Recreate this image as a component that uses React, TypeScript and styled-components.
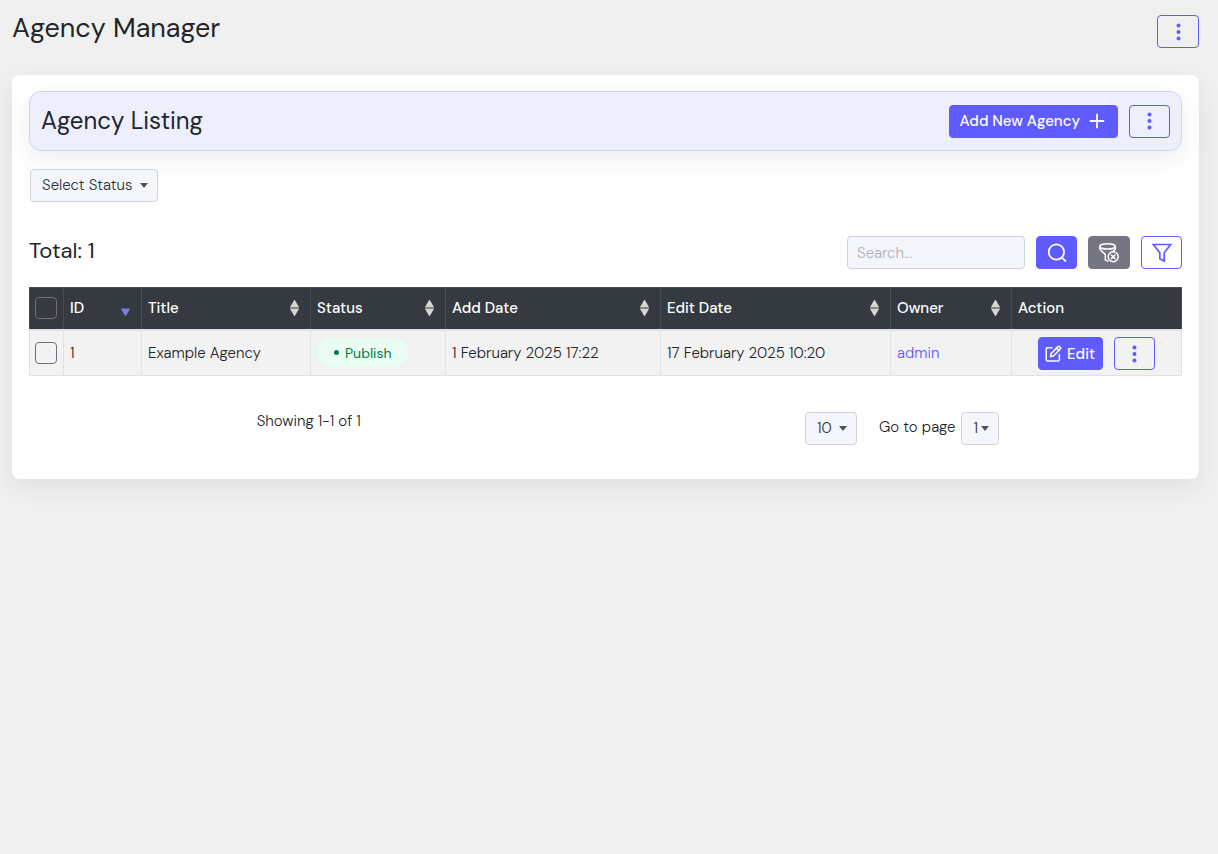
import React from "react";
import styled, { createGlobalStyle } from "styled-components";

const accent = "#5f5bff";

const GlobalStyle = createGlobalStyle`
  *, *::before, *::after { box-sizing: border-box; }
  body {
    margin: 0;
    background: #f0f0f0;
    color: #212529;
    font-family: "DM Sans", Lato, "Open Sans", sans-serif;
    font-size: 15px;
    font-weight: 300;
    line-height: 24px;
  }
  button, input, select { font: inherit; }
`;

const Page = styled.main`
  padding: 12px 19px 32px 12px;
`;

const PageHeader = styled.header`
  display: flex;
  justify-content: space-between;
  align-items: flex-start;
  height: 63px;
  padding-top: 3px;
`;

const PageTitle = styled.h1`
  margin: 0;
  font-size: 27px;
  line-height: 26px;
  font-weight: 400;
`;

const Card = styled.section`
  padding: 16px 0 34px;
  border-radius: 8px;
  background: #fff;
  box-shadow: 0 8px 26px rgba(40, 41, 71, 0.08);
`;

const Section = styled.div`
  padding: 0 17px;
`;

const Banner = styled.div`
  display: flex;
  align-items: center;
  justify-content: space-between;
  height: 60px;
  padding: 0 11px;
  border: 1px solid #d3d0ff;
  border-radius: 12px;
  background: #edeffc;
  box-shadow: 0 8px 26px rgba(40, 41, 61, 0.08);
`;

const BannerTitle = styled.h2`
  margin: 0;
  font-size: 24px;
  line-height: 30px;
  font-weight: 400;
`;

const Group = styled.div`
  display: flex;
  align-items: center;
  gap: 11px;
`;

const RowActions = styled(Group)`
  justify-content: center;
  padding-top: 2px;
`;

type Tone = "solid" | "outline" | "muted";

const fills: Record<Tone, string> = {
  solid: accent,
  outline: "transparent",
  muted: "#757682",
};

type Size = "icon" | "iconWide" | "small" | "large";

const sizes: Record<Size, string> = {
  icon: "width: 41px; padding: 0;",
  iconWide: "width: 42px; padding: 0;",
  small: "gap: 5px; padding: 0 7px 0 6px;",
  large: "gap: 9px; padding: 0 12px 0 10px;",
};

const Button = styled.button<{ $tone: Tone; $size?: Size }>`
  display: inline-flex;
  align-items: center;
  justify-content: center;
  height: 33px;
  ${(p) => sizes[p.$size ?? "icon"]}
  border: 1px solid ${(p) => (p.$tone === "muted" ? fills.muted : accent)};
  border-radius: 4px;
  background: ${(p) => fills[p.$tone]};
  color: ${(p) => (p.$tone === "outline" ? accent : "#fff")};
  font-weight: 500;
  cursor: pointer;
`;

const Filters = styled.div`
  padding-left: 1px;
  margin-top: 18px;
`;

const SelectBox = styled.span<{ $width: number }>`
  display: inline-grid;
  align-items: center;
  width: ${(p) => p.$width}px;
  vertical-align: top;
  & > * { grid-area: 1 / 1; }
  & > svg { justify-self: end; margin-right: 10px; pointer-events: none; }
`;

const Select = styled.select`
  appearance: none;
  width: 100%;
  height: 33px;
  padding: 0 0 2px 11px;
  border: 1px solid #ced4da;
  border-radius: 4px;
  background: #f4f6fc;
  color: #2c3136;
`;

const Toolbar = styled.div`
  display: flex;
  align-items: center;
  justify-content: space-between;
  margin: 34px 0 18px;
`;

const Total = styled.h3`
  margin: 0;
  font-size: 22px;
  line-height: 26px;
  padding-bottom: 4px;
  font-weight: 400;
`;

const SearchInput = styled.input`
  width: 178px;
  height: 33px;
  padding: 0 9px;
  border: 1px solid #ced4da;
  border-radius: 4px;
  background: #f4f6fc;
  color: #212529;
  &::placeholder { color: #aeb1b6; opacity: 1; }
`;

const Table = styled.table`
  width: 100%;
  table-layout: fixed;
  border-collapse: collapse;
`;

const HeadCell = styled.th`
  height: 42px;
  padding: 0 10px 0 6px;
  border: 1px solid #454d55;
  border-bottom: 2px solid #dee2e6;
  background: #343a40;
  color: #fff;
  font-weight: 500;
  text-align: left;
  &:first-child { padding: 0 0 0 5px; }
`;

const HeadContent = styled.div`
  display: flex;
  align-items: center;
  justify-content: space-between;
`;

const Cell = styled.td`
  height: 46px;
  padding: 0 6px;
  border: 1px solid #dee2e6;
  background: #f2f2f2;
  &:first-child { padding: 0 0 0 5px; }
`;

const Check = styled.input`
  display: block;
  appearance: none;
  width: 22px;
  height: 22px;
  margin: 0;
  border: 1px solid #6f7080;
  border-radius: 4px;
  background: transparent;
  &:checked { background: ${accent}; }
`;

const Badge = styled.span`
  display: inline-flex;
  align-items: center;
  gap: 6px;
  height: 29px;
  padding: 0 17px;
  border-radius: 15px;
  background: #eafdf2;
  color: #057a4b;
  font-size: 14px;
  font-weight: 400;
  &::before {
    content: "";
    width: 5px;
    height: 5px;
    border-radius: 50%;
    background: currentColor;
  }
`;

const Link = styled.a`
  color: ${accent};
  text-decoration: none;
`;

const Footer = styled.footer`
  display: grid;
  grid-template-columns: 1fr 1fr;
  margin-top: 36px;
  text-align: center;
`;

const Summary = styled.p`
  margin: 0;
  line-height: 18px;
`;

const Pager = styled.div`
  display: flex;
  justify-content: center;
  gap: 22px;
`;

const PageJump = styled.label`
  display: flex;
  gap: 6px;
  line-height: 30px;
`;

const Dots = () => (
  <svg width="5" height="18" viewBox="0 0 5 18" fill="currentColor" aria-hidden="true">
    <circle cx="2.5" cy="2.5" r="2" />
    <circle cx="2.5" cy="9" r="2" />
    <circle cx="2.5" cy="15.5" r="2" />
  </svg>
);

const Caret = () => (
  <svg width="8" height="5" viewBox="0 0 8 5" aria-hidden="true">
    <path d="M0 0h8L4 5z" fill="#50545a" />
  </svg>
);

const Plus = () => (
  <svg width="16" height="16" viewBox="0 0 16 16" fill="none" stroke="currentColor" strokeWidth="1.8" aria-hidden="true">
    <path d="M8 .8v14.4M.8 8h14.4" />
  </svg>
);

const SearchIcon = () => (
  <svg width="20" height="20" viewBox="0 0 20 20" fill="none" stroke="currentColor" strokeWidth="1.7" strokeLinecap="round" aria-hidden="true">
    <circle cx="9.4" cy="9" r="7.7" />
    <path d="M15 14.6l3.5 3.5" />
  </svg>
);

const ClearFilterIcon = () => (
  <svg width="22" height="22" viewBox="0 0 22 22" fill="none" stroke="currentColor" strokeWidth="1.5" strokeLinejoin="round" strokeLinecap="round" aria-hidden="true">
    <ellipse cx="9.5" cy="4.4" rx="7.8" ry="2.7" />
    <path d="M1.7 4.4v2.1c0 .6.3 1 .8 1.5l4.8 4.4v5.4l2.6 1.4M17.3 4.4v2.1c0 .6-.3 1-.8 1.5l-1.6 1.5" />
    <circle cx="15.2" cy="14.8" r="5" />
    <path d="M13.4 13l3.6 3.6M17 13l-3.6 3.6" />
  </svg>
);

const FilterIcon = () => (
  <svg width="20" height="20" viewBox="0 0 20 20" fill="none" stroke="currentColor" strokeWidth="1.7" aria-hidden="true">
    <path d="M1.3 1.5h17.4l-6.5 8.3v8.3l-4.4-2.4V9.800z" />
  </svg>
);

const EditIcon = () => (
  <svg width="17" height="17" viewBox="0 0 17 17" fill="none" stroke="currentColor" strokeWidth="1.5" strokeLinejoin="round" strokeLinecap="round" aria-hidden="true">
    <path d="M7 2.8H2.6Q1.2 2.8 1.2 4.2v10.4Q1.2 16 2.6 16h10.4q1.4 0 1.4-1.4V9.8" />
    <path d="M5.6 11.6l.4-3L13 1.6q.7-.7 1.4 0l1 1q.7.7 0 1.4l-7 7z" />
    <path d="M11.5 3.1l2.4 2.4" />
  </svg>
);

const SortIcon = ({ active }: { active?: boolean }) => (
  <svg width="11" height="18" viewBox="0 0 11 18" aria-hidden="true">
    {!active && <path d="M5.5 .5l4.7 8H.8z" fill="#d5d5d5" />}
    <path d="M.8 9.5h9.4l-4.7 8z" fill={active ? "#7b7fe0" : "#d5d5d5"} />
  </svg>
);

const columns = [
  { label: "ID", width: 78, sort: "active" },
  { label: "Title", width: 169, sort: "both" },
  { label: "Status", width: 135, sort: "both" },
  { label: "Add Date", width: 215, sort: "both" },
  { label: "Edit Date", width: 230, sort: "both" },
  { label: "Owner", width: 121, sort: "both" },
  { label: "Action", width: 170, sort: "none" },
];

const SizedCol = styled.col<{ $width: number }>`
  width: ${(p) => p.$width}px;
`;

export default function App() {
  return (
    <>
      <GlobalStyle />
      <Page>
        <PageHeader>
          <PageTitle>Agency Manager</PageTitle>
          <Button $tone="outline" $size="iconWide" aria-label="Page actions"><Dots /></Button>
        </PageHeader>
        <Card>
          <Section>
            <Banner>
              <BannerTitle>Agency Listing</BannerTitle>
              <Group>
                <Button $tone="solid" $size="large">Add New Agency <Plus /></Button>
                <Button $tone="outline" aria-label="Listing actions"><Dots /></Button>
              </Group>
            </Banner>
            <Filters>
              <SelectBox $width={128}>
                <Select aria-label="Status"><option>Select Status</option></Select>
                <Caret />
              </SelectBox>
            </Filters>
            <Toolbar>
              <Total>Total: 1</Total>
              <Group>
                <SearchInput type="search" placeholder="Search..." aria-label="Search" />
                <Button $tone="solid" aria-label="Search"><SearchIcon /></Button>
                <Button $tone="muted" $size="iconWide" aria-label="Clear filters"><ClearFilterIcon /></Button>
                <Button $tone="outline" aria-label="Filter"><FilterIcon /></Button>
              </Group>
            </Toolbar>
            <Table>
              <colgroup>
                <SizedCol $width={34} />
                {columns.map((c) => <SizedCol key={c.label} $width={c.width} />)}
              </colgroup>
              <thead>
                <tr>
                  <HeadCell><Check type="checkbox" aria-label="Select all" /></HeadCell>
                  {columns.map((c) => (
                    <HeadCell key={c.label} scope="col">
                      <HeadContent>
                        {c.label}
                        {c.sort !== "none" && <SortIcon active={c.sort === "active"} />}
                      </HeadContent>
                    </HeadCell>
                  ))}
                </tr>
              </thead>
              <tbody>
                <tr>
                  <Cell><Check type="checkbox" aria-label="Select Example Agency" /></Cell>
                  <Cell>1</Cell>
                  <Cell>Example Agency</Cell>
                  <Cell><Badge>Publish</Badge></Cell>
                  <Cell>1 February 2025 17:22</Cell>
                  <Cell>17 February 2025 10:20</Cell>
                  <Cell><Link href="#admin">admin</Link></Cell>
                  <Cell>
                    <RowActions>
                      <Button $tone="solid" $size="small"><EditIcon /> Edit</Button>
                      <Button $tone="outline" aria-label="Row actions"><Dots /></Button>
                    </RowActions>
                  </Cell>
                </tr>
              </tbody>
            </Table>
          </Section>
          <Footer>
            <Summary>Showing 1-1 of 1</Summary>
            <Pager>
              <SelectBox $width={52}>
                <Select aria-label="Rows per page"><option>10</option></Select>
                <Caret />
              </SelectBox>
              <PageJump>
                Go to page
                <SelectBox $width={38}>
                  <Select><option>1</option></Select>
                  <Caret />
                </SelectBox>
              </PageJump>
            </Pager>
          </Footer>
        </Card>
      </Page>
    </>
  );
}
